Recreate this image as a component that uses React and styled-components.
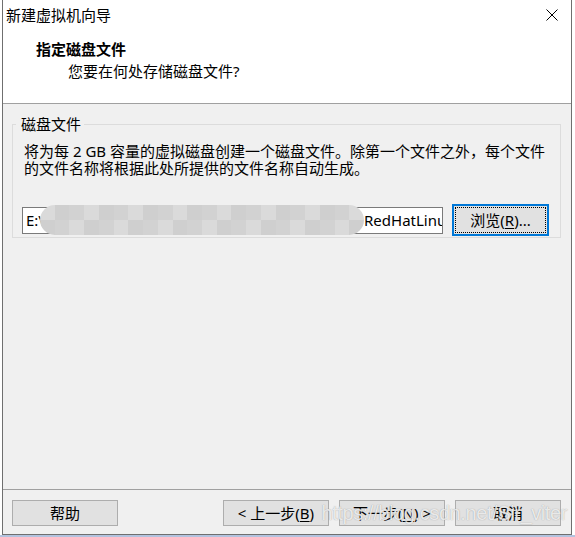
import React from 'react';
import styled, { createGlobalStyle } from 'styled-components';

const GlobalStyle = createGlobalStyle`
    html, body {
        margin: 0;
        padding: 0;
    }
    body {
        font-family: "Noto Sans", "Noto Sans CJK SC", sans-serif;
        font-size: 15px;
        color: #000;
    }
`;

//#region styled-components

const Page = styled.div`
    width: 575px;
    height: 537px;
    overflow: hidden;
    background: linear-gradient(to bottom, #ffffff 535px, #b3c3df 535px);
`;

const Window = styled.div`
    position: relative;
    display: flex;
    flex-direction: column;
    box-sizing: border-box;
    margin-left: 2px;
    width: 570px;
    height: 535px;
    border: 1px solid #6f6f6f;
    border-top: none;
    background-color: #f0f0f0;
`;

const TitleBar = styled.div`
    display: flex;
    justify-content: space-between;
    align-items: center;
    height: 30px;
    padding: 0 13px 0 3px;
    background-color: #fff;
    line-height: 20px;
`;

const CloseIcon = styled.svg`
    width: 12px;
    height: 12px;
    display: block;
`;

const Header = styled.div`
    display: flex;
    flex-direction: column;
    box-sizing: border-box;
    height: 74px;
    padding: 9px 0 0 33px;
    background-color: #fff;
    border-bottom: 1px solid #a0a0a0;
    line-height: 20px;
`;

const HeaderTitle = styled.div`
    font-weight: 700;
`;

const HeaderSub = styled.div`
    margin: 2px 0 0 32px;
`;

const Body = styled.div`
    flex: 1;
    padding-top: 12px;
`;

const Group = styled.fieldset`
    margin: 0 10px 0 9px;
    padding: 0 9px 1px 9px;
    border: 1px solid #dcdcdc;
    line-height: 17px;
`;

const Legend = styled.legend`
    margin-left: -6px;
    padding: 0 3px 0 5px;
    line-height: 17px;
`;

const Desc = styled.p`
    margin: 10px 0 0 2px;
    line-height: 17px;
    white-space: nowrap;
`;

const InputRow = styled.div`
    display: flex;
    align-items: center;
    gap: 9px;
    margin-top: 27px;
`;

const PathInput = styled.div`
    display: flex;
    align-items: center;
    box-sizing: border-box;
    width: 421px;
    height: 27px;
    padding: 0 0 0 3px;
    background-color: #fff;
    border: 1px solid #7a7a7a;
    line-height: 20px;
    white-space: nowrap;
`;

const Prefix = styled.span`
    flex: none;
    width: 14px;
`;

const Mosaic = styled.span`
    flex: none;
    display: grid;
    grid-template-columns: repeat(22, 1fr);
    grid-template-rows: 1fr 1fr;
    width: 324px;
    height: 30px;
    border-radius: 15px;
    overflow: hidden;
    filter: blur(0.6px);
`;

const Cell = styled.span`
    display: block;
`;

const Tail = styled.span`
    flex: 1;
    min-width: 0;
    overflow: hidden;
`;

const Button = styled.div`
    display: flex;
    justify-content: center;
    align-items: center;
    box-sizing: border-box;
    width: ${(props) => props.width || '106px'};
    height: ${(props) => props.height || '26px'};
    background-color: #e1e1e1;
    border: 1px solid #adadad;
    line-height: 20px;
    white-space: nowrap;
`;

const FocusButton = styled(Button)`
    position: relative;
    border: 2px solid #0078d7;
    &::after {
        content: '';
        position: absolute;
        inset: 1px;
        border: 1px dotted #000;
    }
`;

const Key = styled.span`
    text-decoration: underline;
    text-underline-offset: 2px;
`;

const Footer = styled.div`
    display: flex;
    align-items: flex-start;
    height: 45px;
    box-sizing: border-box;
    padding: 10px 10px 0 9px;
    border-top: 1px solid #a0a0a0;
`;

const Spacer = styled.div`
    flex: 1;
`;

const NavGroup = styled.div`
    display: flex;
    gap: 10px;
`;

const Watermark = styled.div`
    position: absolute;
    right: 4px;
    bottom: 9px;
    font-family: "Liberation Sans", Arial, sans-serif;
    font-size: 20px;
    letter-spacing: -0.4px;
    color: rgba(255, 255, 255, 0.8);
    text-shadow: 0 0 1px rgba(110, 110, 110, 0.7);
    pointer-events: none;
`;

//#endregion

const grays = ['#dadada', '#e4e4e4', '#d2d2d2', '#e9e9e9', '#dedede', '#cfcfcf', '#e6e6e6', '#d7d7d7'];
const cells = Array.from({ length: 44 }, (_, i) => grays[(i * 5 + Math.floor(i / 3)) % grays.length]);

const App = () => {
    return (
        <Page>
            <GlobalStyle />
            <Window>
                <TitleBar>
                    <span>新建虚拟机向导</span>
                    <CloseIcon viewBox="0 0 12 12">
                        <path d="M0.5 0.5 L11.5 11.5 M11.5 0.5 L0.5 11.5" stroke="#000" strokeWidth="1" fill="none" />
                    </CloseIcon>
                </TitleBar>
                <Header>
                    <HeaderTitle>指定磁盘文件</HeaderTitle>
                    <HeaderSub>您要在何处存储磁盘文件?</HeaderSub>
                </Header>
                <Body>
                    <Group>
                        <Legend>磁盘文件</Legend>
                        <Desc>
                            将为每 2 GB 容量的虚拟磁盘创建一个磁盘文件。除第一个文件之外，每个文件
                            <br />
                            的文件名称将根据此处所提供的文件名称自动生成。
                        </Desc>
                        <InputRow>
                            <PathInput>
                                <Prefix>E:\</Prefix>
                                <Mosaic>
                                    {cells.map((c, i) => (
                                        <Cell key={i} style={{ background: c }} />
                                    ))}
                                </Mosaic>
                                <Tail>RedHatLinux</Tail>
                            </PathInput>
                            <FocusButton width="97px" height="32px">
                                浏览(<Key>R</Key>)...
                            </FocusButton>
                        </InputRow>
                    </Group>
                </Body>
                <Footer>
                    <Button>帮助</Button>
                    <Spacer />
                    <NavGroup>
                        <Button>
                            &lt; 上一步(<Key>B</Key>)
                        </Button>
                        <Button>
                            下一步(<Key>N</Key>) &gt;
                        </Button>
                        <Button>取消</Button>
                    </NavGroup>
                </Footer>
                <Watermark>https://blog.csdn.net/Sir_viter</Watermark>
            </Window>
        </Page>
    );
};

export default App;
